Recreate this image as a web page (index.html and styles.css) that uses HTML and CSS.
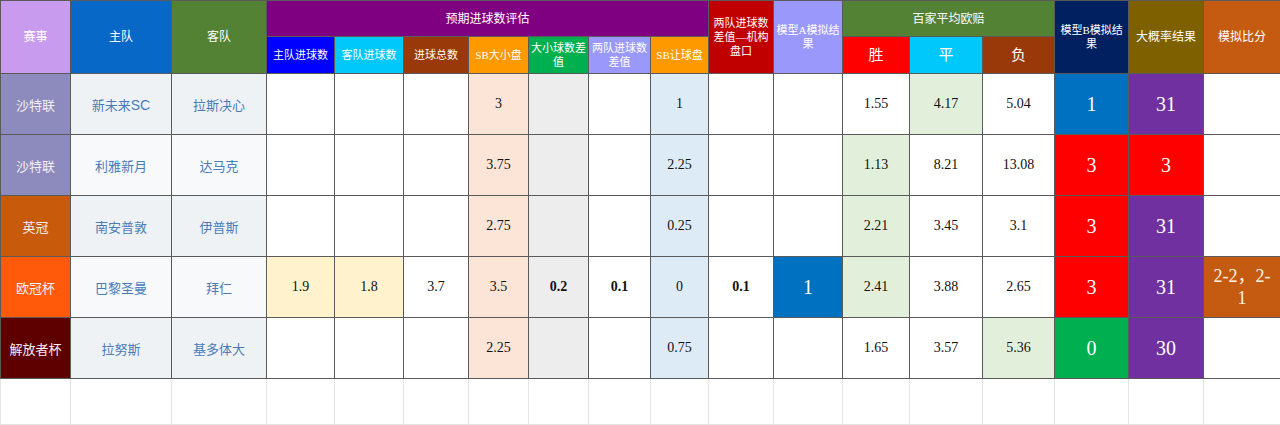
FILE: index.html
```html
<!DOCTYPE html>
<html lang="zh">
<head>
<meta charset="utf-8">
<title>预期进球数评估</title>
<link rel="stylesheet" href="styles.css">
</head>
<body>
<table class="sheet">
  <colgroup>
    <col class="w70"><col class="w101"><col class="w95"><col class="w68"><col class="w69"><col class="w65">
    <col class="w60"><col class="w60"><col class="w62"><col class="w58"><col class="w65"><col class="w69">
    <col class="w67"><col class="w73"><col class="w72"><col class="w74"><col class="w75"><col class="w77">
  </colgroup>
  <thead>
    <tr class="h1">
      <th rowspan="2" class="c-lilac">赛事</th>
      <th rowspan="2" class="c-blue">主队</th>
      <th rowspan="2" class="c-green">客队</th>
      <th colspan="7" class="c-purple">预期进球数评估</th>
      <th rowspan="2" class="c-darkred sm">两队进球数<br>差值—机构<br>盘口</th>
      <th rowspan="2" class="c-peri sm">模型A模拟结<br>果</th>
      <th colspan="3" class="c-green">百家平均欧赔</th>
      <th rowspan="2" class="c-navy sm">模型B模拟结<br>果</th>
      <th rowspan="2" class="c-olive">大概率结果</th>
      <th rowspan="2" class="c-rust">模拟比分</th>
    </tr>
    <tr class="h2">
      <th class="c-pureblue sm">主队进球数</th>
      <th class="c-cyan sm">客队进球数</th>
      <th class="c-brown sm">进球总数</th>
      <th class="c-orange sm">SB大小盘</th>
      <th class="c-emerald sm">大小球数差<br>值</th>
      <th class="c-peri sm">两队进球数<br>差值</th>
      <th class="c-orange sm">SB让球盘</th>
      <th class="c-red big">胜</th>
      <th class="c-cyan big">平</th>
      <th class="c-brown big">负</th>
    </tr>
  </thead>
  <tbody>
    <tr class="r">
      <td class="lg lg-saudi">沙特联</td>
      <td class="team t-a">新未来<span class="latin">SC</span></td>
      <td class="team t-a">拉斯决心</td>
      <td></td><td></td><td></td>
      <td class="bg-peach">3</td>
      <td class="bg-gray"></td>
      <td></td>
      <td class="bg-lblue">1</td>
      <td></td><td></td>
      <td>1.55</td>
      <td class="bg-lgreen">4.17</td>
      <td>5.04</td>
      <td class="res bg-mblue">1</td>
      <td class="res bg-violet">31</td>
      <td></td>
    </tr>
    <tr class="r">
      <td class="lg lg-saudi">沙特联</td>
      <td class="team t-b">利雅新月</td>
      <td class="team t-b">达马克</td>
      <td></td><td></td><td></td>
      <td class="bg-peach">3.75</td>
      <td class="bg-gray"></td>
      <td></td>
      <td class="bg-lblue">2.25</td>
      <td></td><td></td>
      <td class="bg-lgreen">1.13</td>
      <td>8.21</td>
      <td>13.08</td>
      <td class="res bg-red">3</td>
      <td class="res bg-red">3</td>
      <td></td>
    </tr>
    <tr class="r">
      <td class="lg lg-eng">英冠</td>
      <td class="team t-a">南安普敦</td>
      <td class="team t-a">伊普斯</td>
      <td></td><td></td><td></td>
      <td class="bg-peach">2.75</td>
      <td class="bg-gray"></td>
      <td></td>
      <td class="bg-lblue">0.25</td>
      <td></td><td></td>
      <td class="bg-lgreen">2.21</td>
      <td>3.45</td>
      <td>3.1</td>
      <td class="res bg-red">3</td>
      <td class="res bg-violet">31</td>
      <td></td>
    </tr>
    <tr class="r">
      <td class="lg lg-ucl">欧冠杯</td>
      <td class="team t-b">巴黎圣曼</td>
      <td class="team t-b">拜仁</td>
      <td class="bg-cream">1.9</td>
      <td class="bg-cream">1.8</td>
      <td>3.7</td>
      <td class="bg-peach">3.5</td>
      <td class="bg-gray b">0.2</td>
      <td class="b">0.1</td>
      <td class="bg-lblue">0</td>
      <td class="b">0.1</td>
      <td class="res bg-mblue">1</td>
      <td class="bg-lgreen">2.41</td>
      <td>3.88</td>
      <td>2.65</td>
      <td class="res bg-red">3</td>
      <td class="res bg-violet">31</td>
      <td class="score">2-2，2-<br>1</td>
    </tr>
    <tr class="r">
      <td class="lg lg-lib">解放者杯</td>
      <td class="team t-a">拉努斯</td>
      <td class="team t-a">基多体大</td>
      <td></td><td></td><td></td>
      <td class="bg-peach">2.25</td>
      <td class="bg-gray"></td>
      <td></td>
      <td class="bg-lblue">0.75</td>
      <td></td><td></td>
      <td>1.65</td>
      <td>3.57</td>
      <td class="bg-lgreen">5.36</td>
      <td class="res bg-green">0</td>
      <td class="res bg-violet">30</td>
      <td></td>
    </tr>
    <tr class="empty">
      <td></td><td></td><td></td><td></td><td></td><td></td><td></td><td></td><td></td>
      <td></td><td></td><td></td><td></td><td></td><td></td><td></td><td></td><td></td>
    </tr>
  </tbody>
</table>
</body>
</html>
```

FILE: styles.css
```css
html, body {
  margin: 0;
  padding: 0;
  background: #ffffff;
}

.sheet {
  width: 1280px;
  table-layout: fixed;
  border-collapse: collapse;
  font-family: "Liberation Serif", "Noto Sans CJK SC", serif;
  color: #111111;
}

.w70 { width: 70px; }
.w101 { width: 101px; }
.w95 { width: 95px; }
.w68 { width: 68px; }
.w69 { width: 69px; }
.w65 { width: 65px; }
.w60 { width: 60px; }
.w62 { width: 62px; }
.w58 { width: 58px; }
.w67 { width: 67px; }
.w73 { width: 73px; }
.w72 { width: 72px; }
.w74 { width: 74px; }
.w75 { width: 75px; }
.w77 { width: 77px; }

.sheet th,
.sheet td {
  border: 1px solid #5a5a5a;
  padding: 0;
  text-align: center;
  vertical-align: middle;
  overflow: hidden;
}

.sheet th {
  color: #ffffff;
  font-size: 12px;
  font-weight: normal;
  line-height: 14px;
  white-space: nowrap;
}

.h1 { height: 36px; }
.h2 { height: 37px; }
.sheet th.sm { font-size: 11px; line-height: 14px; }
.sheet th.big { font-size: 15px; }

.c-lilac { background: #c99bef; }
.c-blue { background: #0868c8; }
.c-green { background: #548235; }
.c-purple { background: #7f0080; }
.c-darkred { background: #c00000; }
.c-peri { background: #9a99fb; }
.c-navy { background: #002060; }
.c-olive { background: #7f6000; }
.c-rust { background: #c55a11; }
.c-pureblue { background: #0000ff; }
.c-cyan { background: #00c8fb; }
.c-brown { background: #993808; }
.c-orange { background: #ff9900; }
.c-emerald { background: #00b050; }
.c-red { background: #ff0000; }

.r { height: 61px; }
.r td { font-size: 14px; }

.lg {
  color: #f2eef4;
  font-size: 13px !important;
}
.lg-saudi { background: #8d8abd; }
.lg-eng { background: #c85a0c; }
.lg-ucl { background: #ff5a0a; }
.lg-lib { background: #5e0000; }

.team {
  color: #4a7ab8;
  font-size: 13px !important;
}
.t-a { background: #eff2f5; }
.t-b { background: #f7f9fb; }
.latin {
  font-family: "Liberation Sans", "DejaVu Sans", sans-serif;
  font-size: 14px;
}

.bg-peach { background: #fce4d6; }
.bg-gray { background: #ededed; }
.bg-lblue { background: #ddebf7; }
.bg-cream { background: #fff2cc; }
.bg-lgreen { background: #e2efda; }

.b { font-weight: bold; }

.res {
  color: #ffffff;
  font-size: 20px !important;
}
.bg-mblue { background: #0070c0; }
.bg-violet { background: #7030a0; }
.bg-red { background: #ff0000; }
.bg-green { background: #00b050; }

.score {
  background: #c55a11;
  color: #fff4e8;
  font-size: 18px !important;
  line-height: 22px;
}

.empty { height: 46px; }
.sheet .empty td {
  border: 1px solid #e4e4e4;
  border-top-color: #5a5a5a;
}
```
